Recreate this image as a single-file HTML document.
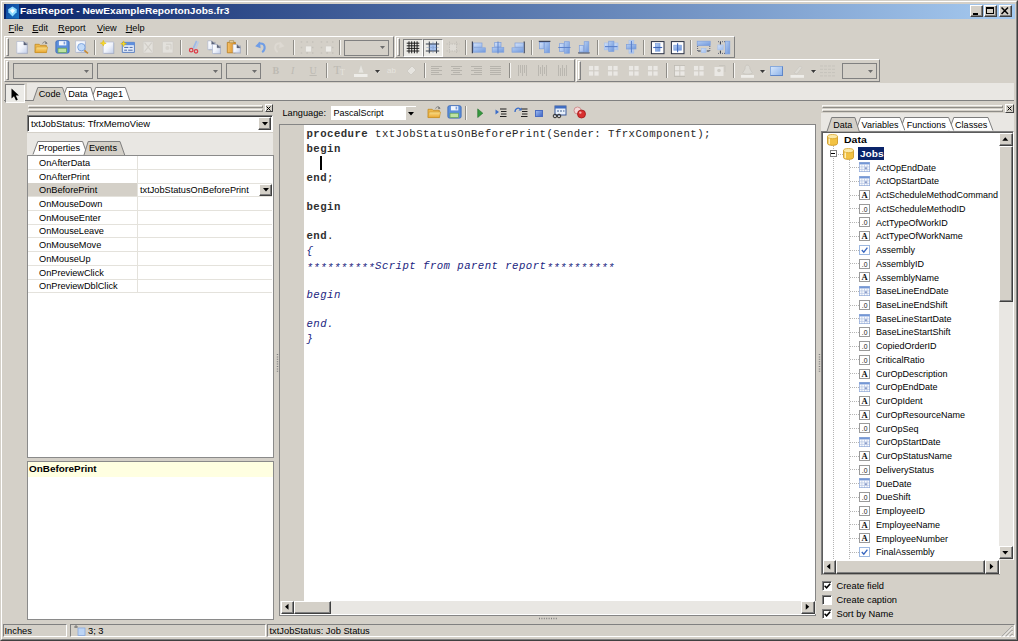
<!DOCTYPE html>
<html><head><meta charset="utf-8"><title>FastReport</title><style>
*{box-sizing:border-box;margin:0;padding:0}
html,body{width:1018px;height:641px;overflow:hidden;background:#d4d0c8}
body{position:relative;font-family:"Liberation Sans",sans-serif;font-size:9.3px;color:#000;line-height:1}
.a{position:absolute}
.t{position:absolute;white-space:pre;line-height:12px;height:12px}
.raised{border:1px solid;border-color:#fff #808080 #808080 #fff}
.sunken{border:1px solid;border-color:#808080 #fff #fff #808080}
.sep{position:absolute;width:2px;border-left:1px solid #8e8c87;border-right:1px solid #f6f5f2}
.grip{position:absolute;width:3px;border:1px solid;border-color:#fff #808080 #808080 #fff}
.combo{position:absolute;border:1px solid #808080;background:#d4d0c8}
.hl{position:absolute;height:1px}
.vl{position:absolute;width:1px}
.code{color:#262626;font-family:"Liberation Mono",monospace;font-size:10.7px;letter-spacing:.44px;position:absolute;white-space:pre;line-height:14.63px;height:14.63px;left:306.5px}
.kw{font-weight:bold;color:#303030}
.cm{font-style:italic;color:#1a2480}
.as{position:relative;top:2.6px}
.row{position:absolute;left:28px;width:244px;height:1px;background:#e4e2dc}
</style></head><body>
<div class="a" style="left:0px;top:0px;width:1018px;height:641px;border:1px solid;border-color:#d4d0c8 #404040 #404040 #d4d0c8"></div>
<div class="a" style="left:1px;top:1px;width:1016px;height:639px;border:1px solid;border-color:#fff #808080 #808080 #fff"></div>
<div class="a" style="left:4px;top:4px;width:1010.5px;height:14.7px;background:linear-gradient(90deg,#0a246a 0%,#a6caf0 100%)"></div>
<div class="t" style="left:20.4px;top:5.1px;color:#fff;font-weight:bold;font-size:9.7px;transform:scaleX(1.045);transform-origin:0 0">FastReport - NewExampleReportonJobs.fr3</div>
<svg class="a" style="left:6px;top:4px" width="13" height="15" viewBox="0 0 13 15"><defs><linearGradient id="ai" x1="0" y1="0" x2="1" y2="1"><stop offset="0" stop-color="#0b3f96"/><stop offset="1" stop-color="#1a74c4"/></linearGradient></defs><rect width="13" height="14.7" fill="url(#ai)"/><path d="M2.2 5.2L6.5 2.6L10.8 5.2L10.6 8.2L6.5 12.6L2.4 8.2Z" fill="#8fdcff"/><path d="M4 6.6L6.5 4.6L9 6.6L6.5 9.6Z" fill="#f4fcff"/></svg>
<div class="a" style="left:970px;top:5px;width:13px;height:12px;background:#d4d0c8;border:1px solid;border-color:#fff #404040 #404040 #fff;box-shadow:inset -1px -1px 0 #808080"></div>
<div class="a" style="left:973px;top:13px;width:5px;height:2px;background:#000"></div>
<div class="a" style="left:984px;top:5px;width:13px;height:12px;background:#d4d0c8;border:1px solid;border-color:#fff #404040 #404040 #fff;box-shadow:inset -1px -1px 0 #808080"></div>
<div class="a" style="left:986px;top:7px;width:8px;height:7px;border:1px solid #000;border-top-width:2px"></div>
<div class="a" style="left:999px;top:5px;width:13px;height:12px;background:#d4d0c8;border:1px solid;border-color:#fff #404040 #404040 #fff;box-shadow:inset -1px -1px 0 #808080"></div>
<svg class="a" style="left:1001px;top:7px" width="8" height="8" viewBox="0 0 8 8"><path d="M0.5 0.5L7 7M7 0.5L0.5 7" stroke="#000" stroke-width="1.5"/></svg>
<div class="t" style="left:8.6px;top:22px;font-size:9.2px"><u>F</u>ile</div>
<div class="t" style="left:32.2px;top:22px;font-size:9.2px"><u>E</u>dit</div>
<div class="t" style="left:58px;top:22px;font-size:9.2px"><u>R</u>eport</div>
<div class="t" style="left:97px;top:22px;font-size:9.2px"><u>V</u>iew</div>
<div class="t" style="left:125.7px;top:22px;font-size:9.2px"><u>H</u>elp</div>
<div class="a raised" style="left:4px;top:36.3px;width:390px;height:21.7px;"></div>
<div class="grip" style="left:6px;top:38.3px;height:17.7px"></div>
<div class="a raised" style="left:395px;top:36.3px;width:340px;height:21.7px;"></div>
<div class="grip" style="left:397px;top:38.3px;height:17.7px"></div>
<div class="a raised" style="left:4px;top:59.3px;width:571px;height:22.5px;"></div>
<div class="grip" style="left:6px;top:61.3px;height:18.5px"></div>
<div class="a raised" style="left:576px;top:59.3px;width:304px;height:22.5px;"></div>
<div class="grip" style="left:578px;top:61.3px;height:18.5px"></div>
<div class="sep" style="left:94px;top:40px;height:15px"></div>
<div class="sep" style="left:180px;top:40px;height:15px"></div>
<div class="sep" style="left:246px;top:40px;height:15px"></div>
<div class="sep" style="left:292.5px;top:40px;height:15px"></div>
<div class="sep" style="left:338.5px;top:40px;height:15px"></div>
<div class="sep" style="left:465px;top:40px;height:15px"></div>
<div class="sep" style="left:531px;top:40px;height:15px"></div>
<div class="sep" style="left:596.5px;top:40px;height:15px"></div>
<div class="sep" style="left:643px;top:40px;height:15px"></div>
<div class="sep" style="left:690px;top:40px;height:15px"></div>
<div class="sep" style="left:326px;top:63px;height:15px"></div>
<div class="sep" style="left:423.5px;top:63px;height:15px"></div>
<div class="sep" style="left:509px;top:63px;height:15px"></div>
<div class="sep" style="left:666px;top:63px;height:15px"></div>
<div class="sep" style="left:732.5px;top:63px;height:15px"></div>
<div class="combo" style="left:343.5px;top:39.5px;width:45.5px;height:16.5px;background:#d4d0c8"></div>
<svg class="a" style="left:380px;top:46px" width="5" height="3" viewBox="0 0 5 3"><path d="M0 0H5L2.5 3Z" fill="#6c6c6c"/></svg>
<div class="combo" style="left:13px;top:63px;width:80px;height:16px;background:#d4d0c8"></div>
<svg class="a" style="left:84px;top:70px" width="5" height="3" viewBox="0 0 5 3"><path d="M0 0H5L2.5 3Z" fill="#6c6c6c"/></svg>
<div class="combo" style="left:97px;top:63px;width:125px;height:16px;background:#d4d0c8"></div>
<svg class="a" style="left:213px;top:70px" width="5" height="3" viewBox="0 0 5 3"><path d="M0 0H5L2.5 3Z" fill="#6c6c6c"/></svg>
<div class="combo" style="left:226px;top:63px;width:34.5px;height:16px;background:#d4d0c8"></div>
<svg class="a" style="left:252px;top:70px" width="5" height="3" viewBox="0 0 5 3"><path d="M0 0H5L2.5 3Z" fill="#6c6c6c"/></svg>
<div class="combo" style="left:842px;top:63px;width:34.5px;height:16px;background:#d4d0c8"></div>
<svg class="a" style="left:868px;top:70px" width="5" height="3" viewBox="0 0 5 3"><path d="M0 0H5L2.5 3Z" fill="#6c6c6c"/></svg>
<svg class="a" style="left:34.2px;top:39.6px" width="15" height="14" viewBox="0 0 15 14"><defs><linearGradient id="gf" x1="0" y1="0" x2="0" y2="1"><stop offset="0" stop-color="#fbe08a"/><stop offset="1" stop-color="#e9a52f"/></linearGradient></defs><path d="M1 4.3H5.2L6.2 5.3H12.3V12.5H1Z" fill="#eeb84a" stroke="#c08c24" stroke-width=".8"/><path d="M2.2 7H13.6L12.4 12.6H1Z" fill="url(#gf)" stroke="#c8922a" stroke-width=".6"/><path d="M8.6 3.6C9.4 1.4 11.6 1.2 12.6 2.8" stroke="#7a7a7a" fill="none" stroke-width=".9"/><path d="M11.6 1.4L13.6 3.6 11.2 3.9Z" fill="#6a6a6a"/></svg>
<svg class="a" style="left:54.6px;top:40.2px" width="15" height="14" viewBox="0 0 15 14"><rect x="0.9" y="0.7" width="13.2" height="12.4" rx="1.6" fill="#5b8edb" stroke="#3c69b8" stroke-width=".9"/><rect x="3.9" y="1.1" width="7.4" height="4.3" fill="#f2f6fd"/><rect x="8.6" y="1.6" width="1.6" height="2.8" fill="#7da0dc"/><rect x="3" y="8.2" width="8.6" height="4.4" fill="#bfe3a2" stroke="#5fa052" stroke-width=".7"/></svg>
<svg class="a" style="left:0;top:0" width="1018" height="641" viewBox="0 0 1018 641"><defs><linearGradient id="pg" x1="0" y1="0" x2="1" y2="1"><stop offset="0" stop-color="#ffffff"/><stop offset=".5" stop-color="#f1f4fb"/><stop offset="1" stop-color="#c3cfea"/></linearGradient><linearGradient id="og" x1="0" y1="0" x2="1" y2="0"><stop offset="0" stop-color="#f6c36a"/><stop offset="1" stop-color="#d98a20"/></linearGradient></defs><path d="M17.8 42.5H27.8V53.800000000000004H17.8Z" fill="#8088a0" opacity=".55"/><path d="M16.8 41.5H23.8L27.2 44.9V53.2H16.8Z" fill="url(#pg)" stroke="#a8b2cc" stroke-width="0.6" /><path d="M23.8 41.5V44.9H27.2Z" fill="#5a6278" stroke="#5a6278" stroke-width="0.3" /><path d="M76.6 41.9H86.0V53.0H76.6Z" fill="#8088a0" opacity=".55"/><path d="M75.6 40.9H85.4V52.4H75.6Z" fill="url(#pg)" stroke="#a8b2cc" stroke-width="0.6" /><circle cx="81.4" cy="47.2" r="3.7" fill="#c2daf8" stroke="#7fa6e0" stroke-width="1"/><path d="M84.3 50.4L88 53.4" fill="None" stroke="#c88a30" stroke-width="1.6" /><path d="M104.2 43H114.19999999999999V53.9H104.2Z" fill="#8088a0" opacity=".55"/><path d="M103.2 42H113.6V53.3H103.2Z" fill="url(#pg)" stroke="#a8b2cc" stroke-width="0.6" /><path d="M103.3 40.300000000000004L104.1 42.400000000000006L106.2 43.2L104.1 44.0L103.3 46.1L102.5 44.0L100.39999999999999 43.2L102.5 42.400000000000006Z" fill="#f8dc28" stroke="#e0b400" stroke-width="0.5" /><path d="M122.3 42.4H134.4V52.4H122.3Z" fill="#e4ecfa" stroke="#4f78c0" stroke-width="0.9" /><path d="M122.3 42.4H134.4V45.2H122.3Z" fill="#5f8fde" /><path d="M124.2 47.4H128.4M129.6 47.4H132.6M124.2 50.2H127M128.2 50.2H132.6" fill="None" stroke="#4a6aa8" stroke-width="1" /><path d="M123.6 40.9L124.39999999999999 43.0L126.5 43.8L124.39999999999999 44.599999999999994L123.6 46.699999999999996L122.8 44.599999999999994L120.69999999999999 43.8L122.8 43.0Z" fill="#f8dc28" stroke="#e0b400" stroke-width="0.5" /><path d="M143.2 41.6H153V53H143.2Z" fill="#e3e1dc" stroke="#cfccc5" stroke-width="0.7" /><path d="M144.5 42.6L151.8 51.6M151.8 42.6L144.5 51.6" fill="None" stroke="#d0cdc7" stroke-width="1.1" /><path d="M162.4 41.6H173V53H162.4Z" fill="#e3e1dc" stroke="#cfccc5" stroke-width="0.7" /><path d="M166 44.2H171V49.5" fill="None" stroke="#d0cdc7" stroke-width="1" /><circle cx="167.4" cy="48" r="2" fill="#d6d3cd"/><path d="M196.6 40.8L193.2 48.6" fill="None" stroke="#9cb8e6" stroke-width="1.7" /><path d="M198.4 41.6L195.6 48.8" fill="None" stroke="#b4c9ec" stroke-width="1.3" /><circle cx="191.2" cy="50.2" r="1.75" fill="none" stroke="#dc3c48" stroke-width="1.25"/><circle cx="196" cy="51.3" r="1.75" fill="none" stroke="#dc3c48" stroke-width="1.25"/><path d="M208.8 41.9H215.6V50.2H208.8Z" fill="#8088a0" opacity=".55"/><path d="M207.8 40.9H211.6L215 44.3V49.6H207.8Z" fill="url(#pg)" stroke="#a8b2cc" stroke-width="0.6" /><path d="M211.6 40.9V44.3H215Z" fill="#5a6278" stroke="#5a6278" stroke-width="0.3" /><path d="M213.5 45.4H221.0V54.1H213.5Z" fill="#8088a0" opacity=".55"/><path d="M212.5 44.4H217.0L220.4 47.8V53.5H212.5Z" fill="url(#pg)" stroke="#a8b2cc" stroke-width="0.6" /><path d="M217.0 44.4V47.8H220.4Z" fill="#5a6278" stroke="#5a6278" stroke-width="0.3" /><path d="M227.3 42.4H235.4V52.8H227.3Z" fill="url(#og)" stroke="#b87a1c" stroke-width="0.8" /><path d="M229.4 40.6H233.6V42.8H229.4Z" fill="#e8cf9c" stroke="#a08850" stroke-width="0.6" /><path d="M234 45.5H240.9V53.4H234Z" fill="#8088a0" opacity=".55"/><path d="M233 44.5H236.9L240.3 47.9V52.8H233Z" fill="url(#pg)" stroke="#a8b2cc" stroke-width="0.6" /><path d="M236.9 44.5V47.9H240.3Z" fill="#5a6278" stroke="#5a6278" stroke-width="0.3" /><path d="M262.2 52.2C266 49.5 265.4 43.2 260.4 43.4L258.6 43.6" fill="None" stroke="#6f9de6" stroke-width="2" /><path d="M255.2 46.3L260 41.6L260.6 48.2Z" fill="#6f9de6" /><path d="M277.6 52.2C273.8 49.5 274.4 43.2 279.4 43.4L281.2 43.6" fill="None" stroke="#ddd9d2" stroke-width="1.8" /><path d="M284.6 46.3L279.8 41.6L279.2 48.2Z" fill="#ddd9d2" /><path d="M305.5 46H311.5V52H305.5Z" fill="#eeede9" stroke="#cfccc6" stroke-width="0.7" /><path d="M300.7 41.2h1.5v1.5h-1.5Z" fill="#c4c1ba" /><path d="M306.4 41.2h1.5v1.5h-1.5Z" fill="#c4c1ba" /><path d="M312.0 41.2h1.5v1.5h-1.5Z" fill="#c4c1ba" /><path d="M300.7 46.8h1.5v1.5h-1.5Z" fill="#c4c1ba" /><path d="M300.7 52.3h1.5v1.5h-1.5Z" fill="#c4c1ba" /><path d="M312.0 52.3h1.5v1.5h-1.5Z" fill="#c4c1ba" /><path d="M312.0 46.8h1.5v1.5h-1.5Z" fill="#c4c1ba" /><path d="M306.4 52.3h1.5v1.5h-1.5Z" fill="#c4c1ba" /><path d="M325.5 46H331.5V52H325.5Z" fill="#eeede9" stroke="#cfccc6" stroke-width="0.7" /><path d="M320.7 41.2h1.5v1.5h-1.5Z" fill="#c4c1ba" /><path d="M326.4 41.2h1.5v1.5h-1.5Z" fill="#c4c1ba" /><path d="M332.0 41.2h1.5v1.5h-1.5Z" fill="#c4c1ba" /><path d="M320.7 46.8h1.5v1.5h-1.5Z" fill="#c4c1ba" /><path d="M320.7 52.3h1.5v1.5h-1.5Z" fill="#c4c1ba" /><path d="M332.0 52.3h1.5v1.5h-1.5Z" fill="#c4c1ba" /><path d="M332.0 46.8h1.5v1.5h-1.5Z" fill="#c4c1ba" /><path d="M326.4 52.3h1.5v1.5h-1.5Z" fill="#c4c1ba" /></svg>
<div class="a" style="left:403px;top:38.5px;width:20px;height:18.5px;background:#ecebe7;border:1px solid;border-color:#808080 #fff #fff #808080"></div>
<div class="a" style="left:423px;top:38.5px;width:20px;height:18.5px;background:#ecebe7;border:1px solid;border-color:#808080 #fff #fff #808080"></div>
<svg class="a" style="left:406px;top:41px" width="14" height="13" viewBox="0 0 14 13"><path d="M3 0.3V12.3M5.7 0.3V12.3M8.4 0.3V12.3M11.1 0.3V12.3M0.7 2.2H13.3M0.7 4.8H13.3M0.7 7.4H13.3M0.7 10H13.3" stroke="#181818" stroke-width="0.95"/></svg>
<svg class="a" style="left:425px;top:41px" width="15" height="13" viewBox="0 0 15 13"><rect x="4.3" y="2.6" width="7.2" height="7.4" fill="#a4c0ee"/><path d="M4.3 0.5V12.3M11.5 0.5V12.3M0.8 3H14.2M0.8 10H14.2" stroke="#39404e" stroke-width="1"/><path d="M8 0.8V12M1.6 6.5H14" stroke="#6a86b8" stroke-width=".7" stroke-dasharray="1 1"/></svg>
<svg class="a" style="left:446px;top:41px" width="14" height="13" viewBox="0 0 14 13"><rect x="3.5" y="3" width="7" height="7" fill="#dedbd5"/><path d="M3.5 0.5V12.5M10.5 0.5V12.5M0.5 3H13.5M0.5 10H13.5" stroke="#c2bfb8" stroke-width="1" stroke-dasharray="1.5 1"/></svg>
<svg class="a" style="left:0;top:0" width="1018" height="641" viewBox="0 0 1018 641"><defs><linearGradient id="gb" x1="0" y1="0" x2="1" y2="1"><stop offset="0" stop-color="#b4cdf2"/><stop offset="1" stop-color="#6f97dc"/></linearGradient><linearGradient id="gl" x1="0" y1="0" x2="1" y2="1"><stop offset="0" stop-color="#d4e2f8"/><stop offset="1" stop-color="#9dbbec"/></linearGradient></defs><path d="M472.4 41.5L472.4 53.3" stroke="#3a4258" stroke-width="1.2" fill="none"/><rect x="473.3" y="43" width="8.7" height="4.2" fill="url(#gl)" stroke="#7d9fdd" stroke-width="0.7"/><rect x="473.3" y="47.8" width="12.0" height="4.4" fill="url(#gb)" stroke="#7d9fdd" stroke-width="0.7"/><rect x="494.7" y="42.6" width="6.3" height="4.4" fill="url(#gl)" stroke="#7d9fdd" stroke-width="0.7"/><rect x="492.2" y="47.6" width="11.6" height="4.6" fill="url(#gb)" stroke="#7d9fdd" stroke-width="0.7"/><path d="M498 41.5L498 53.5" stroke="#5f84cc" stroke-width="1" fill="none"/><path d="M524.2 41.5L524.2 53.3" stroke="#3a4258" stroke-width="1.2" fill="none"/><rect x="515" y="43" width="8.3" height="4.2" fill="url(#gl)" stroke="#7d9fdd" stroke-width="0.7"/><rect x="512" y="47.8" width="11.3" height="4.4" fill="url(#gb)" stroke="#7d9fdd" stroke-width="0.7"/><path d="M538.8 41.4L550.4 41.4" stroke="#3a4258" stroke-width="1.2" fill="none"/><rect x="539.6" y="42.3" width="4.4" height="6.5" fill="url(#gl)" stroke="#7d9fdd" stroke-width="0.7"/><rect x="544.5" y="42.3" width="5.1" height="10.5" fill="url(#gb)" stroke="#7d9fdd" stroke-width="0.7"/><rect x="559.5" y="43.7" width="4.5" height="7.6" fill="url(#gl)" stroke="#7d9fdd" stroke-width="0.7"/><rect x="564.6" y="41.7" width="4.8" height="11.5" fill="url(#gb)" stroke="#7d9fdd" stroke-width="0.7"/><path d="M558.3 47.5L570.5 47.5" stroke="#5f84cc" stroke-width="1" fill="none"/><path d="M578.2 52.9L589.6 52.9" stroke="#3a4258" stroke-width="1.2" fill="none"/><rect x="579.3" y="45.6" width="4.3" height="6.4" fill="url(#gl)" stroke="#7d9fdd" stroke-width="0.7"/><rect x="584.2" y="41.7" width="4.6" height="10.3" fill="url(#gb)" stroke="#7d9fdd" stroke-width="0.7"/><rect x="604.3" y="43" width="4.4" height="6.8" fill="url(#gl)" stroke="#a8c2ec" stroke-width="0.7"/><rect x="613.9" y="43" width="4.1" height="6.8" fill="url(#gl)" stroke="#a8c2ec" stroke-width="0.7"/><rect x="608.7" y="41.2" width="5.2" height="10.2" fill="url(#gb)" stroke="#7d9fdd" stroke-width="0.7"/><path d="M605 46.6L617.5 46.6" stroke="#5a80cc" stroke-width="1.1" fill="none"/><rect x="629" y="40.3" width="4.8" height="4.2" fill="url(#gl)" stroke="#a8c2ec" stroke-width="0.7"/><rect x="629" y="49" width="4.8" height="4.2" fill="url(#gl)" stroke="#a8c2ec" stroke-width="0.7"/><rect x="626.5" y="44.5" width="9.5" height="4.5" fill="url(#gb)" stroke="#7d9fdd" stroke-width="0.7"/><path d="M631.4 41L631.4 52.6" stroke="#5a80cc" stroke-width="1.1" fill="none"/><rect x="651.4" y="41.6" width="12.6" height="12.1" fill="#fff" stroke="#283044" stroke-width="1"/><rect x="655.4" y="43.6" width="4.6" height="7.6" fill="url(#gb)" stroke="#7d9fdd" stroke-width="0.7"/><path d="M653.2 47.5L662.2 47.5" stroke="#3e66b8" stroke-width="1.1" fill="none"/><rect x="671.4" y="41.6" width="12.6" height="12.1" fill="#fff" stroke="#283044" stroke-width="1"/><rect x="673.8" y="45.2" width="7.6" height="5.0" fill="url(#gb)" stroke="#7d9fdd" stroke-width="0.7"/><path d="M677.6 43.3L677.6 52.2" stroke="#3e66b8" stroke-width="1.1" fill="none"/><rect x="697.2" y="41.2" width="13.0" height="4.4" fill="url(#gb)" stroke="#7d9fdd" stroke-width="0.7"/><rect x="701.3" y="48.4" width="4.7" height="4.2" fill="url(#gl)" stroke="#a8c2ec" stroke-width="0.7"/><path d="M697.6 46L697.6 52" stroke="#505870" stroke-width="0.9" stroke-dasharray="1 1" fill="none"/><path d="M709.8 46L709.8 52" stroke="#505870" stroke-width="0.9" stroke-dasharray="1 1" fill="none"/><path d="M698 51L700.6 51" stroke="#303848" stroke-width="1" fill="none"/><path d="M706.8 51L709.4 51" stroke="#303848" stroke-width="1" fill="none"/><rect x="725.3" y="41.2" width="4.5" height="12.7" fill="url(#gb)" stroke="#7d9fdd" stroke-width="0.7"/><rect x="717.8" y="45" width="5.4" height="4.8" fill="url(#gl)" stroke="#a8c2ec" stroke-width="0.7"/><path d="M718 41.7L725 41.7" stroke="#505870" stroke-width="0.9" stroke-dasharray="1 1" fill="none"/><path d="M718 53.4L725 53.4" stroke="#505870" stroke-width="0.9" stroke-dasharray="1 1" fill="none"/><path d="M720.4 42L720.4 44.4" stroke="#303848" stroke-width="1" fill="none"/><path d="M720.4 50.6L720.4 53" stroke="#303848" stroke-width="1" fill="none"/></svg>
<div class="t" style="left:272.5px;top:64.5px;font-family:Liberation Serif,serif;font-weight:bold;font-size:10px;color:#bdbab3">B</div>
<div class="t" style="left:291px;top:64.5px;font-family:Liberation Serif,serif;font-style:italic;font-size:10px;color:#bdbab3">I</div>
<div class="t" style="left:309.5px;top:64.5px;font-family:Liberation Serif,serif;font-size:10px;color:#bdbab3"><u>U</u></div>
<div class="t" style="left:333.5px;top:63.5px;font-family:Liberation Serif,serif;font-size:12px;color:#bdbab3">T</div>
<div class="t" style="left:340px;top:67px;font-family:Liberation Serif,serif;font-size:8px;color:#e6e4df">T</div>
<svg class="a" style="left:353px;top:63px" width="16" height="15" viewBox="0 0 16 15"><path d="M8 1L5 10H11Z" fill="#e6e4df" stroke="#cfccc5" stroke-width=".6"/><rect x="1" y="11" width="13.5" height="3" fill="#eeede9"/></svg>
<svg class="a" style="left:374.5px;top:70px" width="5" height="3" viewBox="0 0 5 3"><path d="M0 0H5L2.5 3Z" fill="#3a3a3a"/></svg>
<svg class="a" style="left:375px;top:70.6px" width="5" height="3" viewBox="0 0 5 3"><path d="M4.3 0L5 0 2.5 3Z" fill="#fff"/></svg>
<div class="t" style="left:387px;top:65px;font-size:8px;color:#e6e4df">ab</div>
<svg class="a" style="left:405px;top:64px" width="13" height="13" viewBox="0 0 13 13"><path d="M2 7L7 2L11 6L6 11Z" fill="#e6e4df" stroke="#cbc8c1" stroke-width=".8"/></svg>
<svg class="a" style="left:431px;top:65px" width="12" height="12" viewBox="0 0 12 12"><rect x="0" y="1" width="11" height="1" fill="#b6b3ac"/><rect x="0" y="3" width="8" height="1" fill="#b6b3ac"/><rect x="0" y="5" width="11" height="1" fill="#b6b3ac"/><rect x="0" y="7" width="8" height="1" fill="#b6b3ac"/><rect x="0" y="9" width="11" height="1" fill="#b6b3ac"/></svg>
<svg class="a" style="left:451px;top:65px" width="12" height="12" viewBox="0 0 12 12"><rect x="0" y="1" width="11" height="1" fill="#b6b3ac"/><rect x="2" y="3" width="7" height="1" fill="#b6b3ac"/><rect x="0" y="5" width="11" height="1" fill="#b6b3ac"/><rect x="2" y="7" width="7" height="1" fill="#b6b3ac"/><rect x="0" y="9" width="11" height="1" fill="#b6b3ac"/></svg>
<svg class="a" style="left:471px;top:65px" width="12" height="12" viewBox="0 0 12 12"><rect x="0" y="1" width="11" height="1" fill="#b6b3ac"/><rect x="3" y="3" width="8" height="1" fill="#b6b3ac"/><rect x="0" y="5" width="11" height="1" fill="#b6b3ac"/><rect x="3" y="7" width="8" height="1" fill="#b6b3ac"/><rect x="0" y="9" width="11" height="1" fill="#b6b3ac"/></svg>
<svg class="a" style="left:490px;top:65px" width="12" height="12" viewBox="0 0 12 12"><rect x="0" y="1" width="11" height="1" fill="#b6b3ac"/><rect x="0" y="3" width="11" height="1" fill="#b6b3ac"/><rect x="0" y="5" width="11" height="1" fill="#b6b3ac"/><rect x="0" y="7" width="11" height="1" fill="#b6b3ac"/><rect x="0" y="9" width="11" height="1" fill="#b6b3ac"/></svg>
<svg class="a" style="left:517px;top:65px" width="12" height="12" viewBox="0 0 12 12"><rect x="1" y="0" width="1" height="11" fill="#bab7b0"/><rect x="3" y="0" width="1" height="8" fill="#bab7b0"/><rect x="5" y="0" width="1" height="11" fill="#bab7b0"/><rect x="7" y="0" width="1" height="8" fill="#bab7b0"/><rect x="9" y="0" width="1" height="11" fill="#bab7b0"/></svg>
<svg class="a" style="left:537px;top:65px" width="12" height="12" viewBox="0 0 12 12"><rect x="1" y="0" width="1" height="11" fill="#bab7b0"/><rect x="3" y="2" width="1" height="7" fill="#bab7b0"/><rect x="5" y="0" width="1" height="11" fill="#bab7b0"/><rect x="7" y="2" width="1" height="7" fill="#bab7b0"/><rect x="9" y="0" width="1" height="11" fill="#bab7b0"/></svg>
<svg class="a" style="left:557px;top:65px" width="12" height="12" viewBox="0 0 12 12"><rect x="1" y="0" width="1" height="11" fill="#bab7b0"/><rect x="3" y="3" width="1" height="8" fill="#bab7b0"/><rect x="5" y="0" width="1" height="11" fill="#bab7b0"/><rect x="7" y="3" width="1" height="8" fill="#bab7b0"/><rect x="9" y="0" width="1" height="11" fill="#bab7b0"/></svg>
<svg class="a" style="left:587.5px;top:65px" width="11.5" height="11.5" viewBox="-0.5 -0.5 12 12"><g fill="#eae8e4"><rect x="0.5" y="0.5" width="4.6" height="4.6"/><rect x="6" y="0.5" width="4.6" height="4.6"/><rect x="0.5" y="6" width="4.6" height="4.6"/><rect x="6" y="6" width="4.6" height="4.6"/></g><path d="M5.5 0V11M0 5.5H11" stroke="#d0cdc6" stroke-width=".8"/></svg>
<svg class="a" style="left:607px;top:65px" width="11.5" height="11.5" viewBox="-0.5 -0.5 12 12"><g fill="#eae8e4"><rect x="0.5" y="0.5" width="4.6" height="4.6"/><rect x="6" y="0.5" width="4.6" height="4.6"/><rect x="0.5" y="6" width="4.6" height="4.6"/><rect x="6" y="6" width="4.6" height="4.6"/></g><path d="M5.5 0V11M0 5.5H11" stroke="#d0cdc6" stroke-width=".8"/></svg>
<svg class="a" style="left:627.5px;top:65px" width="11.5" height="11.5" viewBox="-0.5 -0.5 12 12"><g fill="#eae8e4"><rect x="0.5" y="0.5" width="4.6" height="4.6"/><rect x="6" y="0.5" width="4.6" height="4.6"/><rect x="0.5" y="6" width="4.6" height="4.6"/><rect x="6" y="6" width="4.6" height="4.6"/></g><path d="M5.5 0V11M0 5.5H11" stroke="#d0cdc6" stroke-width=".8"/></svg>
<svg class="a" style="left:646.5px;top:65px" width="11.5" height="11.5" viewBox="-0.5 -0.5 12 12"><g fill="#eae8e4"><rect x="0.5" y="0.5" width="4.6" height="4.6"/><rect x="6" y="0.5" width="4.6" height="4.6"/><rect x="0.5" y="6" width="4.6" height="4.6"/><rect x="6" y="6" width="4.6" height="4.6"/></g><path d="M5.5 0V11M0 5.5H11" stroke="#d0cdc6" stroke-width=".8"/></svg>
<svg class="a" style="left:673.5px;top:65px" width="11.5" height="11.5" viewBox="-0.5 -0.5 12 12"><g fill="#eae8e4"><rect x="0.5" y="0.5" width="4.6" height="4.6"/><rect x="6" y="0.5" width="4.6" height="4.6"/><rect x="0.5" y="6" width="4.6" height="4.6"/><rect x="6" y="6" width="4.6" height="4.6"/></g><path d="M5.5 0V11M0 5.5H11" stroke="#d0cdc6" stroke-width=".8"/><rect x="-.3" y="-.3" width="11.6" height="11.6" fill="none" stroke="#b9b6af" stroke-width=".8"/></svg>
<svg class="a" style="left:693px;top:65px" width="11.5" height="11.5" viewBox="-0.5 -0.5 12 12"><g fill="#eae8e4"><rect x="0.5" y="0.5" width="4.6" height="4.6"/><rect x="6" y="0.5" width="4.6" height="4.6"/><rect x="0.5" y="6" width="4.6" height="4.6"/><rect x="6" y="6" width="4.6" height="4.6"/></g><path d="M5.5 0V11M0 5.5H11" stroke="#d0cdc6" stroke-width=".8"/></svg>
<svg class="a" style="left:713.5px;top:64.5px" width="12" height="12" viewBox="0 0 12 12"><rect x="0.5" y="2" width="9" height="9" fill="#eae8e4"/><path d="M5 0.5H11V7" fill="none" stroke="#c8c5be" stroke-width="1"/><circle cx="5" cy="5.5" r="1.8" fill="#cfccc5"/></svg>
<svg class="a" style="left:739.5px;top:63.5px" width="15" height="15" viewBox="0 0 15 15"><path d="M7 1C9 1 10 3 10 5L12.5 9C12.5 10.5 2.5 10.5 2.5 9L5 5C5 3 5.5 1 7 1Z" fill="#dcdad4" stroke="#c4c1ba" stroke-width=".7"/><rect x="1" y="11" width="13" height="2.8" fill="#eeede9"/></svg>
<svg class="a" style="left:760.0px;top:70px" width="5" height="3" viewBox="0 0 5 3"><path d="M0 0H5L2.5 3Z" fill="#3a3a3a"/></svg>
<svg class="a" style="left:760.5px;top:70.6px" width="5" height="3" viewBox="0 0 5 3"><path d="M4.3 0L5 0 2.5 3Z" fill="#fff"/></svg>
<div class="a" style="left:770.4px;top:65.5px;width:12.8px;height:10px;background:linear-gradient(135deg,#d6e6fa,#8fb4ea);border:1px solid #5f86c8;border-top-color:#88aadc;border-left-color:#88aadc"></div>
<svg class="a" style="left:789.5px;top:63.5px" width="15" height="15" viewBox="0 0 15 15"><path d="M4 9L10 2L12 3.5L7 10Z" fill="#dcdad4" stroke="#c8c5be" stroke-width=".6"/><rect x="0.5" y="11" width="13.5" height="2.8" fill="#eeede9"/></svg>
<svg class="a" style="left:810.5px;top:70px" width="5" height="3" viewBox="0 0 5 3"><path d="M0 0H5L2.5 3Z" fill="#3a3a3a"/></svg>
<svg class="a" style="left:811px;top:70.6px" width="5" height="3" viewBox="0 0 5 3"><path d="M4.3 0L5 0 2.5 3Z" fill="#fff"/></svg>
<svg class="a" style="left:819.5px;top:65px" width="15" height="12" viewBox="0 0 15 12"><path d="M0 1H15M0 4.3H15M0 7.6H15M0 10.9H15" stroke="#c6c3bc" stroke-width="1" stroke-dasharray="3 1"/></svg>
<div class="a" style="left:27px;top:82.5px;width:987px;height:18px;background:#e9e7e3"></div>
<div class="a" style="left:4px;top:100px;width:1010px;height:1px;background:#808080"></div>
<div class="a" style="left:5px;top:84px;width:19.5px;height:19px;background:#ecebe7;border:1px solid;border-color:#808080 #fff #fff #808080"></div>
<svg class="a" style="left:11px;top:87.5px" width="9" height="13" viewBox="0 0 9 13"><path d="M0.5 0.5V10.5L3 8.2L5 12.5L6.8 11.7L4.8 7.6H8Z" fill="#000"/></svg>
<svg class="a" style="left:89.5px;top:87px" width="40.8" height="13.5" viewBox="0 0 40.8 13.5"><path d="M1.0 13.5 L5.700000000000003 0.5 H35.3 L39.80000000000001 13.5 Z" fill="#fff"/><path d="M1.0 13.5 L5.700000000000003 0.5 H35.3 L39.80000000000001 13.5" fill="none" stroke="#7c7c7c" stroke-width="1"/></svg>
<div class="t" style="left:96.5px;top:88.3px;font-size:9.2px">Page1</div>
<svg class="a" style="left:61.3px;top:87px" width="34.7" height="13.5" viewBox="0 0 34.7 13.5"><path d="M1.0 13.5 L5.700000000000003 0.5 H29.900000000000006 L33.7 13.5 Z" fill="#fff"/><path d="M1.0 13.5 L5.700000000000003 0.5 H29.900000000000006 L33.7 13.5" fill="none" stroke="#7c7c7c" stroke-width="1"/></svg>
<div class="t" style="left:68.2px;top:88.3px;font-size:9.2px">Data</div>
<svg class="a" style="left:31.799999999999997px;top:87px" width="36.2" height="14.2" viewBox="0 0 36.2 14.2"><path d="M1.0 14.200000000000003 L5.800000000000004 0.5 H30.5 L35.2 14.200000000000003 Z" fill="#d4d0c8"/><path d="M1.0 14.200000000000003 L5.800000000000004 0.5 H30.5 L35.2 14.200000000000003" fill="none" stroke="#7c7c7c" stroke-width="1"/></svg>
<div class="t" style="left:38.7px;top:88.3px;font-size:9.2px">Code</div>
<div class="a" style="left:28px;top:105px;width:234.5px;height:3px;border:1px solid;border-color:#f6f5f2 #8e8c87 #8e8c87 #f6f5f2"></div>
<div class="a" style="left:28px;top:109px;width:234.5px;height:3px;border:1px solid;border-color:#f6f5f2 #8e8c87 #8e8c87 #f6f5f2"></div>
<div class="a" style="left:264.7px;top:104.2px;width:8px;height:8.2px;border:1px solid;border-color:#fff #404040 #404040 #fff"></div>
<svg class="a" style="left:266.2px;top:105.8px" width="5" height="5" viewBox="0 0 5 5"><path d="M0.5 0.5L4.5 4.5M4.5 0.5L0.5 4.5" stroke="#000" stroke-width="1"/></svg>
<div class="a" style="left:27px;top:115px;width:246px;height:17px;background:#fff;border:1px solid;border-color:#808080 #fff #fff #808080;box-shadow:inset 1px 1px 0 #404040"></div>
<div class="t" style="left:31px;top:118px;font-size:9.4px">txtJobStatus: TfrxMemoView</div>
<div class="a" style="left:258px;top:117px;width:13px;height:13px;background:#d4d0c8;border:1px solid;border-color:#fff #404040 #404040 #fff;box-shadow:inset -1px -1px 0 #808080"></div>
<svg class="a" style="left:261.5px;top:122px" width="6" height="4" viewBox="0 0 6 4"><path d="M0 0H6L3 3.5Z" fill="#000"/></svg>
<div class="a" style="left:27px;top:133px;width:246px;height:22px;background:#e9e7e3"></div>
<div class="a" style="left:27px;top:154.5px;width:246.8px;height:303.5px;background:#fff;border:1px solid #8a8a8a"></div>
<svg class="a" style="left:31.799999999999997px;top:141px" width="56.2" height="13.5" viewBox="0 0 56.2 13.5"><path d="M1.0 13.5 L5.800000000000004 0.5 H50.60000000000001 L55.2 13.5 Z" fill="#fff"/><path d="M1.0 13.5 L5.800000000000004 0.5 H50.60000000000001 L55.2 13.5" fill="none" stroke="#7c7c7c" stroke-width="1"/></svg>
<div class="t" style="left:38.2px;top:142.3px;font-size:9.2px">Properties</div>
<svg class="a" style="left:83.1px;top:141px" width="42.7" height="14" viewBox="0 0 42.7 14"><path d="M1.0 14 L5.200000000000003 0.5 H37.0 L41.7 14 Z" fill="#d4d0c8"/><path d="M1.0 14 L5.200000000000003 0.5 H37.0 L41.7 14" fill="none" stroke="#7c7c7c" stroke-width="1"/></svg>
<div class="t" style="left:88.9px;top:142.3px;font-size:9.2px">Events</div>
<div class="t" style="left:39px;top:156.8px;font-size:9.2px">OnAfterData</div>
<div class="row" style="top:168.82px"></div>
<div class="t" style="left:39px;top:170.52px;font-size:9.2px">OnAfterPrint</div>
<div class="row" style="top:182.54px"></div>
<div class="a" style="left:28px;top:183.04px;width:109.5px;height:13.72px;background:#d4d0c8"></div>
<div class="t" style="left:39px;top:184.24px;font-size:9.2px">OnBeforePrint</div>
<div class="row" style="top:196.26px"></div>
<div class="t" style="left:39px;top:197.96px;font-size:9.2px">OnMouseDown</div>
<div class="row" style="top:209.98px"></div>
<div class="t" style="left:39px;top:211.68px;font-size:9.2px">OnMouseEnter</div>
<div class="row" style="top:223.70px"></div>
<div class="t" style="left:39px;top:225.4px;font-size:9.2px">OnMouseLeave</div>
<div class="row" style="top:237.42px"></div>
<div class="t" style="left:39px;top:239.12px;font-size:9.2px">OnMouseMove</div>
<div class="row" style="top:251.14px"></div>
<div class="t" style="left:39px;top:252.84px;font-size:9.2px">OnMouseUp</div>
<div class="row" style="top:264.86px"></div>
<div class="t" style="left:39px;top:266.56px;font-size:9.2px">OnPreviewClick</div>
<div class="row" style="top:278.58px"></div>
<div class="t" style="left:39px;top:280.28px;font-size:9.2px">OnPreviewDblClick</div>
<div class="row" style="top:292.30px"></div>
<div class="a" style="left:137px;top:156px;width:1px;height:137.2px;background:#e4e2dc"></div>
<div class="t" style="left:140px;top:184.24px;font-size:9.2px">txtJobStatusOnBeforePrint</div>
<div class="a" style="left:259px;top:183.54px;width:13px;height:12.5px;background:#d4d0c8;border:1px solid;border-color:#fff #404040 #404040 #fff;box-shadow:inset -1px -1px 0 #808080"></div>
<svg class="a" style="left:262.5px;top:188.04px" width="6" height="4" viewBox="0 0 6 4"><path d="M0 0H6L3 3.5Z" fill="#000"/></svg>
<div class="a" style="left:27px;top:460.7px;width:246.8px;height:159.8px;background:#fff;border:1px solid #8a8a8a"></div>
<div class="a" style="left:28px;top:461.7px;width:244.8px;height:15px;background:#ffffe1"></div>
<div class="t" style="left:29px;top:463.2px;font-weight:bold;font-size:9px;transform:scaleX(1.1);transform-origin:0 0">OnBeforePrint</div>
<svg class="a" style="left:275.5px;top:354px" width="3" height="18" viewBox="0 0 3 18"><path d="M1.5 0V18" stroke="#808080" stroke-width="1.4" stroke-dasharray="1 1.4"/></svg>
<div class="t" style="left:282.5px;top:107.3px;font-size:9.2px">Language:</div>
<div class="a" style="left:331px;top:106px;width:85px;height:14px;background:#fff"></div>
<div class="t" style="left:333.5px;top:107.3px;font-size:9.0px">PascalScript</div>
<div class="a" style="left:405.5px;top:106.5px;width:10px;height:13px;background:#d4d0c8"></div>
<svg class="a" style="left:408px;top:112px" width="6" height="4" viewBox="0 0 6 4"><path d="M0 0H6L3 3.5Z" fill="#000"/></svg>
<svg class="a" style="left:426.5px;top:104.5px" width="15" height="14" viewBox="0 0 15 14"><defs><linearGradient id="gf" x1="0" y1="0" x2="0" y2="1"><stop offset="0" stop-color="#fbe08a"/><stop offset="1" stop-color="#e9a52f"/></linearGradient></defs><path d="M1 4.3H5.2L6.2 5.3H12.3V12.5H1Z" fill="#eeb84a" stroke="#c08c24" stroke-width=".8"/><path d="M2.2 7H13.6L12.4 12.6H1Z" fill="url(#gf)" stroke="#c8922a" stroke-width=".6"/><path d="M8.6 3.6C9.4 1.4 11.6 1.2 12.6 2.8" stroke="#7a7a7a" fill="none" stroke-width=".9"/><path d="M11.6 1.4L13.6 3.6 11.2 3.9Z" fill="#6a6a6a"/></svg>
<svg class="a" style="left:446.5px;top:105px" width="15" height="14" viewBox="0 0 15 14"><rect x="0.9" y="0.7" width="13.2" height="12.4" rx="1.6" fill="#5b8edb" stroke="#3c69b8" stroke-width=".9"/><rect x="3.9" y="1.1" width="7.4" height="4.3" fill="#f2f6fd"/><rect x="8.6" y="1.6" width="1.6" height="2.8" fill="#7da0dc"/><rect x="3" y="8.2" width="8.6" height="4.4" fill="#bfe3a2" stroke="#5fa052" stroke-width=".7"/></svg>
<div class="sep" style="left:465px;top:105.5px;height:14px"></div>
<svg class="a" style="left:477px;top:108px" width="7" height="10" viewBox="0 0 7 10"><path d="M0.7 0.9L5.8 5.2L0.7 9.5Z" fill="#35983f" stroke="#23702c" stroke-width=".6"/></svg>
<svg class="a" style="left:494.5px;top:107px" width="12" height="11" viewBox="0 0 12 11"><path d="M5 2H11.5M6 4.5H11.5M6 7H11.5M5 9.5H11.5" stroke="#202020" stroke-width="1.2"/><path d="M0.5 2.5L4 5L0.5 7.5Z" fill="#3a6cc8"/></svg>
<svg class="a" style="left:513.5px;top:106px" width="14" height="12" viewBox="0 0 14 12"><path d="M7 3H13.5M8 5.5H13.5M8 8H13.5M7 10.5H13.5" stroke="#202020" stroke-width="1.2"/><path d="M1 6C1 2 5 1 6.5 3.5" fill="none" stroke="#3a6cc8" stroke-width="1.3"/><path d="M4.5 4.5H7.5V1.5Z" fill="#3a6cc8"/></svg>
<div class="a" style="left:535px;top:109.5px;width:8px;height:7.5px;background:linear-gradient(135deg,#9bb8ee,#4068c8);border:1px solid #4a6cc0"></div>
<svg class="a" style="left:552px;top:105px" width="15" height="14" viewBox="0 0 15 14"><rect x="3" y="1" width="11" height="9" fill="#e8f0fb" stroke="#3a5a9a"/><rect x="3" y="1" width="11" height="2.5" fill="#3f6cc0"/><path d="M5 6H7M8 6H10M11 6H12.5" stroke="#406090" stroke-width="1"/><circle cx="3" cy="11" r="1.8" fill="none" stroke="#303030" stroke-width="1"/><circle cx="7" cy="11" r="1.8" fill="none" stroke="#303030" stroke-width="1"/></svg>
<svg class="a" style="left:572.5px;top:105.5px" width="14" height="13" viewBox="0 0 14 13"><circle cx="4.5" cy="4.5" r="3.5" fill="#f4d8d8" stroke="#c88080" stroke-width=".8"/><circle cx="8.5" cy="8" r="4" fill="#d83030" stroke="#a01818" stroke-width=".8"/><circle cx="7.3" cy="6.6" r="1.2" fill="#f8b0b0"/></svg>
<div class="a" style="left:279px;top:124px;width:537px;height:492px;background:#fff;border:1px solid #858585"></div>
<div class="a" style="left:280px;top:125px;width:23.7px;height:476px;background:#d4d0c8"></div>
<div class="code " style="top:126.90px"><span class="kw">procedure</span> txtJobStatusOnBeforePrint(Sender: TfrxComponent);</div>
<div class="code " style="top:141.53px"><span class="kw">begin</span></div>
<div class="code " style="top:170.79px"><span class="kw">end</span>;</div>
<div class="code " style="top:200.05px"><span class="kw">begin</span></div>
<div class="code " style="top:229.31px"><span class="kw">end</span>.</div>
<div class="code cm" style="top:243.94px">{</div>
<div class="code cm" style="top:258.57px"><span class="as">**********</span>Script from parent report<span class="as">**********</span></div>
<div class="code cm" style="top:287.83px">begin</div>
<div class="code cm" style="top:317.09px">end.</div>
<div class="code cm" style="top:331.72px">}</div>
<div class="a" style="left:320px;top:155.6px;width:2px;height:14px;background:#000"></div>
<div class="a" style="left:280px;top:600.7px;width:535.5px;height:13.8px;background:#e9e7e3"></div>
<div class="a" style="left:281px;top:600.7px;width:13px;height:13.3px;background:#d4d0c8;border:1px solid;border-color:#fff #404040 #404040 #fff;box-shadow:inset -1px -1px 0 #808080"></div>
<svg class="a" style="left:0;top:0" width="1018" height="641"><path d="M288.5 603.85V609.85L285.0 606.85Z" fill="#000"/></svg>
<div class="a" style="left:294px;top:600.7px;width:37px;height:13.3px;background:#d4d0c8;border:1px solid;border-color:#fff #404040 #404040 #fff;box-shadow:inset -1px -1px 0 #808080"></div>
<div class="a" style="left:801px;top:600.7px;width:13.5px;height:13.3px;background:#d4d0c8;border:1px solid;border-color:#fff #404040 #404040 #fff;box-shadow:inset -1px -1px 0 #808080"></div>
<svg class="a" style="left:0;top:0" width="1018" height="641"><path d="M805.75 603.85V609.85L809.25 606.85Z" fill="#000"/></svg>
<svg class="a" style="left:539px;top:617px" width="18" height="3" viewBox="0 0 18 3"><path d="M0 1.5H18" stroke="#808080" stroke-width="1.4" stroke-dasharray="1 1.4"/></svg>
<svg class="a" style="left:818px;top:354px" width="3" height="18" viewBox="0 0 3 18"><path d="M1.5 0V18" stroke="#808080" stroke-width="1.4" stroke-dasharray="1 1.4"/></svg>
<div class="a" style="left:822px;top:105px;width:181px;height:3px;border:1px solid;border-color:#f6f5f2 #8e8c87 #8e8c87 #f6f5f2"></div>
<div class="a" style="left:822px;top:108.6px;width:181px;height:3px;border:1px solid;border-color:#f6f5f2 #8e8c87 #8e8c87 #f6f5f2"></div>
<div class="a" style="left:1005px;top:104px;width:9px;height:8.5px;border:1px solid;border-color:#fff #404040 #404040 #fff"></div>
<svg class="a" style="left:1007px;top:105.5px" width="5" height="5" viewBox="0 0 5 5"><path d="M0.5 0.5L4.5 4.5M4.5 0.5L0.5 4.5" stroke="#000" stroke-width="1"/></svg>
<div class="a" style="left:821px;top:113px;width:193px;height:19px;background:#e9e7e3"></div>
<div class="a" style="left:821px;top:130.7px;width:193px;height:444.5px;background:#fff;border:1px solid;border-color:#808080 #fff #9f9c97 #808080;box-shadow:inset 1px 1px 0 #5c5c5c"></div>
<svg class="a" style="left:948px;top:117.2px" width="45.9" height="13.5" viewBox="0 0 45.9 13.5"><path d="M1 13.499999999999986 L5.7999999999999545 0.5 H40 L44.89999999999998 13.499999999999986 Z" fill="#fff"/><path d="M1 13.499999999999986 L5.7999999999999545 0.5 H40 L44.89999999999998 13.499999999999986" fill="none" stroke="#7c7c7c" stroke-width="1"/></svg>
<div class="t" style="left:955px;top:118.5px;font-size:9.1px">Classes</div>
<svg class="a" style="left:899px;top:117.2px" width="55.6" height="13.5" viewBox="0 0 55.6 13.5"><path d="M1 13.499999999999986 L5.600000000000023 0.5 H49.60000000000002 L54.60000000000002 13.499999999999986 Z" fill="#fff"/><path d="M1 13.499999999999986 L5.600000000000023 0.5 H49.60000000000002 L54.60000000000002 13.499999999999986" fill="none" stroke="#7c7c7c" stroke-width="1"/></svg>
<div class="t" style="left:906.8px;top:118.5px;font-size:9.0px">Functions</div>
<svg class="a" style="left:854.5px;top:117.2px" width="50.9" height="13.5" viewBox="0 0 50.9 13.5"><path d="M1.0 13.499999999999986 L5.5 0.5 H45.0 L49.89999999999998 13.499999999999986 Z" fill="#fff"/><path d="M1.0 13.499999999999986 L5.5 0.5 H45.0 L49.89999999999998 13.499999999999986" fill="none" stroke="#7c7c7c" stroke-width="1"/></svg>
<div class="t" style="left:861.6px;top:118.5px;font-size:9.0px">Variables</div>
<svg class="a" style="left:826.4px;top:117.2px" width="34.3" height="14.5" viewBox="0 0 34.3 14.5"><path d="M1.0 14.499999999999986 L5.7000000000000455 0.5 H28.899999999999977 L33.30000000000007 14.499999999999986 Z" fill="#d4d0c8"/><path d="M1.0 14.499999999999986 L5.7000000000000455 0.5 H28.899999999999977 L33.30000000000007 14.499999999999986" fill="none" stroke="#7c7c7c" stroke-width="1"/></svg>
<div class="t" style="left:833.3px;top:118.5px;font-size:9.0px">Data</div>
<div class="a" style="left:999px;top:133px;width:13.6px;height:427px;background:#e9e7e3"></div>
<div class="a" style="left:999px;top:133px;width:13.6px;height:13.4px;background:#d4d0c8;border:1px solid;border-color:#fff #404040 #404040 #fff;box-shadow:inset -1px -1px 0 #808080"></div>
<svg class="a" style="left:0;top:0" width="1018" height="641"><path d="M1002.3 140.7H1008.3L1005.3 137.2Z" fill="#000"/></svg>
<div class="a" style="left:999px;top:146.4px;width:13.6px;height:155.6px;background:#d4d0c8;border:1px solid;border-color:#fff #404040 #404040 #fff;box-shadow:inset -1px -1px 0 #808080"></div>
<div class="a" style="left:999px;top:546.4px;width:13.6px;height:13px;background:#d4d0c8;border:1px solid;border-color:#fff #404040 #404040 #fff;box-shadow:inset -1px -1px 0 #808080"></div>
<svg class="a" style="left:0;top:0" width="1018" height="641"><path d="M1002.3 550.9H1008.3L1005.3 554.4Z" fill="#000"/></svg>
<div class="a" style="left:823px;top:560.4px;width:176px;height:13.4px;background:#e9e7e3"></div>
<div class="a" style="left:823px;top:560.4px;width:12.5px;height:13.4px;background:#d4d0c8;border:1px solid;border-color:#fff #404040 #404040 #fff;box-shadow:inset -1px -1px 0 #808080"></div>
<svg class="a" style="left:0;top:0" width="1018" height="641"><path d="M830.25 563.6V569.6L826.75 566.6Z" fill="#000"/></svg>
<div class="a" style="left:835.5px;top:560.4px;width:149.5px;height:13.4px;background:#d4d0c8;border:1px solid;border-color:#fff #404040 #404040 #fff;box-shadow:inset -1px -1px 0 #808080"></div>
<div class="a" style="left:985px;top:560.4px;width:13.7px;height:13.4px;background:#d4d0c8;border:1px solid;border-color:#fff #404040 #404040 #fff;box-shadow:inset -1px -1px 0 #808080"></div>
<svg class="a" style="left:0;top:0" width="1018" height="641"><path d="M989.85 563.6V569.6L993.35 566.6Z" fill="#000"/></svg>
<div class="a" style="left:1000px;top:560.3px;width:14.5px;height:15.2px;background:#d4d0c8"></div>
<svg class="a" style="left:827px;top:134px" width="11" height="12" viewBox="0 0 11 12"><path d="M0.5 2.5V9.5C0.5 12 10.5 12 10.5 9.5V2.5Z" fill="#f2c243" stroke="#c8921c" stroke-width=".8"/><ellipse cx="5.5" cy="2.6" rx="5" ry="2.1" fill="#fbe9a8" stroke="#d8a428" stroke-width=".8"/><path d="M2.3 4.5V10.3" stroke="#fdf0c0" stroke-width="1.3"/></svg>
<div class="t" style="left:843.7px;top:133.9px;font-weight:bold;font-size:9.2px;transform:scaleX(1.14);transform-origin:0 0">Data</div>
<svg class="a" style="left:832.5px;top:146px" width="1" height="414" viewBox="0 0 1 414"><path d="M0.5 0V414" stroke="#b4b4b4" stroke-width="1" stroke-dasharray="1 1"/></svg>
<svg class="a" style="left:849px;top:160px" width="1" height="400" viewBox="0 0 1 400"><path d="M0.5 0V400" stroke="#b4b4b4" stroke-width="1" stroke-dasharray="1 1"/></svg>
<svg class="a" style="left:836px;top:153.53500000000003px" width="8" height="1" viewBox="0 0 8 1"><path d="M0 0.5H8" stroke="#b4b4b4" stroke-width="1" stroke-dasharray="1 1"/></svg>
<div class="a" style="left:829.5px;top:150.3px;width:7px;height:7px;background:#fff;border:1px solid #808080"></div>
<div class="a" style="left:831px;top:153.1px;width:4px;height:1.4px;background:#000"></div>
<svg class="a" style="left:843.3px;top:147.6px" width="11" height="12" viewBox="0 0 11 12"><path d="M0.5 2.5V9.5C0.5 12 10.5 12 10.5 9.5V2.5Z" fill="#f2c243" stroke="#c8921c" stroke-width=".8"/><ellipse cx="5.5" cy="2.6" rx="5" ry="2.1" fill="#fbe9a8" stroke="#d8a428" stroke-width=".8"/><path d="M2.3 4.5V10.3" stroke="#fdf0c0" stroke-width="1.3"/></svg>
<div class="a" style="left:858px;top:147px;width:26px;height:13px;background:#0a246a"></div>
<div class="t" style="left:860.3px;top:147.835px;font-weight:bold;font-size:9.2px;color:#fff;transform:scaleX(1.1);transform-origin:0 0">Jobs</div>
<svg class="a" style="left:850px;top:167.17px" width="9" height="1" viewBox="0 0 9 1"><path d="M0 0.5H9" stroke="#b4b4b4" stroke-width="1" stroke-dasharray="1 1"/></svg>
<svg class="a" style="left:859px;top:162.47px" width="11" height="10" viewBox="0 0 11 10"><rect x="0" y="0" width="11" height="10" fill="#fbfcfe"/><rect x="0" y="0" width="11" height="2.4" fill="#7397d6"/><path d="M0 4.9H11M0 7.4H11M2.9 2.4V10M5.5 2.4V10M8.1 2.4V10" stroke="#b4c4e4" stroke-width=".7"/><rect x="0.35" y="0.35" width="10.3" height="9.3" fill="none" stroke="#8fa9d8" stroke-width=".7"/><rect x="5.9" y="5.3" width="2" height="1.9" fill="#8a9cc8"/></svg>
<div class="t" style="left:876px;top:161.67px;font-size:9.0px">ActOpEndDate</div>
<svg class="a" style="left:850px;top:180.9px" width="9" height="1" viewBox="0 0 9 1"><path d="M0 0.5H9" stroke="#b4b4b4" stroke-width="1" stroke-dasharray="1 1"/></svg>
<svg class="a" style="left:859px;top:176.2px" width="11" height="10" viewBox="0 0 11 10"><rect x="0" y="0" width="11" height="10" fill="#fbfcfe"/><rect x="0" y="0" width="11" height="2.4" fill="#7397d6"/><path d="M0 4.9H11M0 7.4H11M2.9 2.4V10M5.5 2.4V10M8.1 2.4V10" stroke="#b4c4e4" stroke-width=".7"/><rect x="0.35" y="0.35" width="10.3" height="9.3" fill="none" stroke="#8fa9d8" stroke-width=".7"/><rect x="5.9" y="5.3" width="2" height="1.9" fill="#8a9cc8"/></svg>
<div class="t" style="left:876px;top:175.4px;font-size:9.0px">ActOpStartDate</div>
<svg class="a" style="left:850px;top:194.64px" width="9" height="1" viewBox="0 0 9 1"><path d="M0 0.5H9" stroke="#b4b4b4" stroke-width="1" stroke-dasharray="1 1"/></svg>
<svg class="a" style="left:859px;top:189.94px" width="11" height="10" viewBox="0 0 11 10"><rect x="0.5" y="0.5" width="10" height="9" fill="#fff" stroke="#9a9a9a" stroke-width="1"/><text x="5.5" y="8.2" text-anchor="middle" font-family="Liberation Serif" font-weight="bold" font-size="8.5" fill="#101010">A</text></svg>
<div class="t" style="left:876px;top:189.14px;font-size:9.0px">ActScheduleMethodCommand</div>
<svg class="a" style="left:850px;top:208.38px" width="9" height="1" viewBox="0 0 9 1"><path d="M0 0.5H9" stroke="#b4b4b4" stroke-width="1" stroke-dasharray="1 1"/></svg>
<svg class="a" style="left:859px;top:203.68px" width="11" height="10" viewBox="0 0 11 10"><rect x="0.5" y="0.5" width="10" height="9" fill="#fff" stroke="#9a9a9a" stroke-width="1"/><text x="5.6" y="7.8" text-anchor="middle" font-family="Liberation Sans" font-size="6.8" fill="#202020">.0</text></svg>
<div class="t" style="left:876px;top:202.88px;font-size:9.0px">ActScheduleMethodID</div>
<svg class="a" style="left:850px;top:222.11px" width="9" height="1" viewBox="0 0 9 1"><path d="M0 0.5H9" stroke="#b4b4b4" stroke-width="1" stroke-dasharray="1 1"/></svg>
<svg class="a" style="left:859px;top:217.41px" width="11" height="10" viewBox="0 0 11 10"><rect x="0.5" y="0.5" width="10" height="9" fill="#fff" stroke="#9a9a9a" stroke-width="1"/><text x="5.6" y="7.8" text-anchor="middle" font-family="Liberation Sans" font-size="6.8" fill="#202020">.0</text></svg>
<div class="t" style="left:876px;top:216.61px;font-size:9.0px">ActTypeOfWorkID</div>
<svg class="a" style="left:850px;top:235.84px" width="9" height="1" viewBox="0 0 9 1"><path d="M0 0.5H9" stroke="#b4b4b4" stroke-width="1" stroke-dasharray="1 1"/></svg>
<svg class="a" style="left:859px;top:231.14px" width="11" height="10" viewBox="0 0 11 10"><rect x="0.5" y="0.5" width="10" height="9" fill="#fff" stroke="#9a9a9a" stroke-width="1"/><text x="5.5" y="8.2" text-anchor="middle" font-family="Liberation Serif" font-weight="bold" font-size="8.5" fill="#101010">A</text></svg>
<div class="t" style="left:876px;top:230.34px;font-size:9.0px">ActTypeOfWorkName</div>
<svg class="a" style="left:850px;top:249.58px" width="9" height="1" viewBox="0 0 9 1"><path d="M0 0.5H9" stroke="#b4b4b4" stroke-width="1" stroke-dasharray="1 1"/></svg>
<svg class="a" style="left:859px;top:244.88px" width="11" height="10" viewBox="0 0 11 10"><rect x="0.5" y="0.5" width="10" height="9" fill="#fff" stroke="#9db8e0" stroke-width="1"/><path d="M2.8 5L4.8 7.2L8.4 2.6" fill="none" stroke="#3a68c0" stroke-width="1.4"/></svg>
<div class="t" style="left:876px;top:244.08px;font-size:9.0px">Assembly</div>
<svg class="a" style="left:850px;top:263.31px" width="9" height="1" viewBox="0 0 9 1"><path d="M0 0.5H9" stroke="#b4b4b4" stroke-width="1" stroke-dasharray="1 1"/></svg>
<svg class="a" style="left:859px;top:258.62px" width="11" height="10" viewBox="0 0 11 10"><rect x="0.5" y="0.5" width="10" height="9" fill="#fff" stroke="#9a9a9a" stroke-width="1"/><text x="5.6" y="7.8" text-anchor="middle" font-family="Liberation Sans" font-size="6.8" fill="#202020">.0</text></svg>
<div class="t" style="left:876px;top:257.81px;font-size:9.0px">AssemblyID</div>
<svg class="a" style="left:850px;top:277.05px" width="9" height="1" viewBox="0 0 9 1"><path d="M0 0.5H9" stroke="#b4b4b4" stroke-width="1" stroke-dasharray="1 1"/></svg>
<svg class="a" style="left:859px;top:272.35px" width="11" height="10" viewBox="0 0 11 10"><rect x="0.5" y="0.5" width="10" height="9" fill="#fff" stroke="#9a9a9a" stroke-width="1"/><text x="5.5" y="8.2" text-anchor="middle" font-family="Liberation Serif" font-weight="bold" font-size="8.5" fill="#101010">A</text></svg>
<div class="t" style="left:876px;top:271.55px;font-size:9.0px">AssemblyName</div>
<svg class="a" style="left:850px;top:290.78px" width="9" height="1" viewBox="0 0 9 1"><path d="M0 0.5H9" stroke="#b4b4b4" stroke-width="1" stroke-dasharray="1 1"/></svg>
<svg class="a" style="left:859px;top:286.08px" width="11" height="10" viewBox="0 0 11 10"><rect x="0" y="0" width="11" height="10" fill="#fbfcfe"/><rect x="0" y="0" width="11" height="2.4" fill="#7397d6"/><path d="M0 4.9H11M0 7.4H11M2.9 2.4V10M5.5 2.4V10M8.1 2.4V10" stroke="#b4c4e4" stroke-width=".7"/><rect x="0.35" y="0.35" width="10.3" height="9.3" fill="none" stroke="#8fa9d8" stroke-width=".7"/><rect x="5.9" y="5.3" width="2" height="1.9" fill="#8a9cc8"/></svg>
<div class="t" style="left:876px;top:285.28px;font-size:9.0px">BaseLineEndDate</div>
<svg class="a" style="left:850px;top:304.52px" width="9" height="1" viewBox="0 0 9 1"><path d="M0 0.5H9" stroke="#b4b4b4" stroke-width="1" stroke-dasharray="1 1"/></svg>
<svg class="a" style="left:859px;top:299.82px" width="11" height="10" viewBox="0 0 11 10"><rect x="0.5" y="0.5" width="10" height="9" fill="#fff" stroke="#9a9a9a" stroke-width="1"/><text x="5.6" y="7.8" text-anchor="middle" font-family="Liberation Sans" font-size="6.8" fill="#202020">.0</text></svg>
<div class="t" style="left:876px;top:299.02px;font-size:9.0px">BaseLineEndShift</div>
<svg class="a" style="left:850px;top:318.25px" width="9" height="1" viewBox="0 0 9 1"><path d="M0 0.5H9" stroke="#b4b4b4" stroke-width="1" stroke-dasharray="1 1"/></svg>
<svg class="a" style="left:859px;top:313.56px" width="11" height="10" viewBox="0 0 11 10"><rect x="0" y="0" width="11" height="10" fill="#fbfcfe"/><rect x="0" y="0" width="11" height="2.4" fill="#7397d6"/><path d="M0 4.9H11M0 7.4H11M2.9 2.4V10M5.5 2.4V10M8.1 2.4V10" stroke="#b4c4e4" stroke-width=".7"/><rect x="0.35" y="0.35" width="10.3" height="9.3" fill="none" stroke="#8fa9d8" stroke-width=".7"/><rect x="5.9" y="5.3" width="2" height="1.9" fill="#8a9cc8"/></svg>
<div class="t" style="left:876px;top:312.75px;font-size:9.0px">BaseLineStartDate</div>
<svg class="a" style="left:850px;top:331.99px" width="9" height="1" viewBox="0 0 9 1"><path d="M0 0.5H9" stroke="#b4b4b4" stroke-width="1" stroke-dasharray="1 1"/></svg>
<svg class="a" style="left:859px;top:327.29px" width="11" height="10" viewBox="0 0 11 10"><rect x="0.5" y="0.5" width="10" height="9" fill="#fff" stroke="#9a9a9a" stroke-width="1"/><text x="5.6" y="7.8" text-anchor="middle" font-family="Liberation Sans" font-size="6.8" fill="#202020">.0</text></svg>
<div class="t" style="left:876px;top:326.49px;font-size:9.0px">BaseLineStartShift</div>
<svg class="a" style="left:850px;top:345.72px" width="9" height="1" viewBox="0 0 9 1"><path d="M0 0.5H9" stroke="#b4b4b4" stroke-width="1" stroke-dasharray="1 1"/></svg>
<svg class="a" style="left:859px;top:341.02px" width="11" height="10" viewBox="0 0 11 10"><rect x="0.5" y="0.5" width="10" height="9" fill="#fff" stroke="#9a9a9a" stroke-width="1"/><text x="5.6" y="7.8" text-anchor="middle" font-family="Liberation Sans" font-size="6.8" fill="#202020">.0</text></svg>
<div class="t" style="left:876px;top:340.22px;font-size:9.0px">CopiedOrderID</div>
<svg class="a" style="left:850px;top:359.46px" width="9" height="1" viewBox="0 0 9 1"><path d="M0 0.5H9" stroke="#b4b4b4" stroke-width="1" stroke-dasharray="1 1"/></svg>
<svg class="a" style="left:859px;top:354.76px" width="11" height="10" viewBox="0 0 11 10"><rect x="0.5" y="0.5" width="10" height="9" fill="#fff" stroke="#9a9a9a" stroke-width="1"/><text x="5.6" y="7.8" text-anchor="middle" font-family="Liberation Sans" font-size="6.8" fill="#202020">.0</text></svg>
<div class="t" style="left:876px;top:353.96px;font-size:9.0px">CriticalRatio</div>
<svg class="a" style="left:850px;top:373.19px" width="9" height="1" viewBox="0 0 9 1"><path d="M0 0.5H9" stroke="#b4b4b4" stroke-width="1" stroke-dasharray="1 1"/></svg>
<svg class="a" style="left:859px;top:368.5px" width="11" height="10" viewBox="0 0 11 10"><rect x="0.5" y="0.5" width="10" height="9" fill="#fff" stroke="#9a9a9a" stroke-width="1"/><text x="5.5" y="8.2" text-anchor="middle" font-family="Liberation Serif" font-weight="bold" font-size="8.5" fill="#101010">A</text></svg>
<div class="t" style="left:876px;top:367.69px;font-size:9.0px">CurOpDescription</div>
<svg class="a" style="left:850px;top:386.93px" width="9" height="1" viewBox="0 0 9 1"><path d="M0 0.5H9" stroke="#b4b4b4" stroke-width="1" stroke-dasharray="1 1"/></svg>
<svg class="a" style="left:859px;top:382.23px" width="11" height="10" viewBox="0 0 11 10"><rect x="0" y="0" width="11" height="10" fill="#fbfcfe"/><rect x="0" y="0" width="11" height="2.4" fill="#7397d6"/><path d="M0 4.9H11M0 7.4H11M2.9 2.4V10M5.5 2.4V10M8.1 2.4V10" stroke="#b4c4e4" stroke-width=".7"/><rect x="0.35" y="0.35" width="10.3" height="9.3" fill="none" stroke="#8fa9d8" stroke-width=".7"/><rect x="5.9" y="5.3" width="2" height="1.9" fill="#8a9cc8"/></svg>
<div class="t" style="left:876px;top:381.43px;font-size:9.0px">CurOpEndDate</div>
<svg class="a" style="left:850px;top:400.66px" width="9" height="1" viewBox="0 0 9 1"><path d="M0 0.5H9" stroke="#b4b4b4" stroke-width="1" stroke-dasharray="1 1"/></svg>
<svg class="a" style="left:859px;top:395.96px" width="11" height="10" viewBox="0 0 11 10"><rect x="0.5" y="0.5" width="10" height="9" fill="#fff" stroke="#9a9a9a" stroke-width="1"/><text x="5.5" y="8.2" text-anchor="middle" font-family="Liberation Serif" font-weight="bold" font-size="8.5" fill="#101010">A</text></svg>
<div class="t" style="left:876px;top:395.16px;font-size:9.0px">CurOpIdent</div>
<svg class="a" style="left:850px;top:414.4px" width="9" height="1" viewBox="0 0 9 1"><path d="M0 0.5H9" stroke="#b4b4b4" stroke-width="1" stroke-dasharray="1 1"/></svg>
<svg class="a" style="left:859px;top:409.7px" width="11" height="10" viewBox="0 0 11 10"><rect x="0.5" y="0.5" width="10" height="9" fill="#fff" stroke="#9a9a9a" stroke-width="1"/><text x="5.5" y="8.2" text-anchor="middle" font-family="Liberation Serif" font-weight="bold" font-size="8.5" fill="#101010">A</text></svg>
<div class="t" style="left:876px;top:408.9px;font-size:9.0px">CurOpResourceName</div>
<svg class="a" style="left:850px;top:428.13px" width="9" height="1" viewBox="0 0 9 1"><path d="M0 0.5H9" stroke="#b4b4b4" stroke-width="1" stroke-dasharray="1 1"/></svg>
<svg class="a" style="left:859px;top:423.44px" width="11" height="10" viewBox="0 0 11 10"><rect x="0.5" y="0.5" width="10" height="9" fill="#fff" stroke="#9a9a9a" stroke-width="1"/><text x="5.6" y="7.8" text-anchor="middle" font-family="Liberation Sans" font-size="6.8" fill="#202020">.0</text></svg>
<div class="t" style="left:876px;top:422.63px;font-size:9.0px">CurOpSeq</div>
<svg class="a" style="left:850px;top:441.87px" width="9" height="1" viewBox="0 0 9 1"><path d="M0 0.5H9" stroke="#b4b4b4" stroke-width="1" stroke-dasharray="1 1"/></svg>
<svg class="a" style="left:859px;top:437.17px" width="11" height="10" viewBox="0 0 11 10"><rect x="0" y="0" width="11" height="10" fill="#fbfcfe"/><rect x="0" y="0" width="11" height="2.4" fill="#7397d6"/><path d="M0 4.9H11M0 7.4H11M2.9 2.4V10M5.5 2.4V10M8.1 2.4V10" stroke="#b4c4e4" stroke-width=".7"/><rect x="0.35" y="0.35" width="10.3" height="9.3" fill="none" stroke="#8fa9d8" stroke-width=".7"/><rect x="5.9" y="5.3" width="2" height="1.9" fill="#8a9cc8"/></svg>
<div class="t" style="left:876px;top:436.37px;font-size:9.0px">CurOpStartDate</div>
<svg class="a" style="left:850px;top:455.6px" width="9" height="1" viewBox="0 0 9 1"><path d="M0 0.5H9" stroke="#b4b4b4" stroke-width="1" stroke-dasharray="1 1"/></svg>
<svg class="a" style="left:859px;top:450.9px" width="11" height="10" viewBox="0 0 11 10"><rect x="0.5" y="0.5" width="10" height="9" fill="#fff" stroke="#9a9a9a" stroke-width="1"/><text x="5.5" y="8.2" text-anchor="middle" font-family="Liberation Serif" font-weight="bold" font-size="8.5" fill="#101010">A</text></svg>
<div class="t" style="left:876px;top:450.1px;font-size:9.0px">CurOpStatusName</div>
<svg class="a" style="left:850px;top:469.34px" width="9" height="1" viewBox="0 0 9 1"><path d="M0 0.5H9" stroke="#b4b4b4" stroke-width="1" stroke-dasharray="1 1"/></svg>
<svg class="a" style="left:859px;top:464.64px" width="11" height="10" viewBox="0 0 11 10"><rect x="0.5" y="0.5" width="10" height="9" fill="#fff" stroke="#9a9a9a" stroke-width="1"/><text x="5.6" y="7.8" text-anchor="middle" font-family="Liberation Sans" font-size="6.8" fill="#202020">.0</text></svg>
<div class="t" style="left:876px;top:463.84px;font-size:9.0px">DeliveryStatus</div>
<svg class="a" style="left:850px;top:483.07px" width="9" height="1" viewBox="0 0 9 1"><path d="M0 0.5H9" stroke="#b4b4b4" stroke-width="1" stroke-dasharray="1 1"/></svg>
<svg class="a" style="left:859px;top:478.38px" width="11" height="10" viewBox="0 0 11 10"><rect x="0" y="0" width="11" height="10" fill="#fbfcfe"/><rect x="0" y="0" width="11" height="2.4" fill="#7397d6"/><path d="M0 4.9H11M0 7.4H11M2.9 2.4V10M5.5 2.4V10M8.1 2.4V10" stroke="#b4c4e4" stroke-width=".7"/><rect x="0.35" y="0.35" width="10.3" height="9.3" fill="none" stroke="#8fa9d8" stroke-width=".7"/><rect x="5.9" y="5.3" width="2" height="1.9" fill="#8a9cc8"/></svg>
<div class="t" style="left:876px;top:477.57px;font-size:9.0px">DueDate</div>
<svg class="a" style="left:850px;top:496.81px" width="9" height="1" viewBox="0 0 9 1"><path d="M0 0.5H9" stroke="#b4b4b4" stroke-width="1" stroke-dasharray="1 1"/></svg>
<svg class="a" style="left:859px;top:492.11px" width="11" height="10" viewBox="0 0 11 10"><rect x="0.5" y="0.5" width="10" height="9" fill="#fff" stroke="#9a9a9a" stroke-width="1"/><text x="5.6" y="7.8" text-anchor="middle" font-family="Liberation Sans" font-size="6.8" fill="#202020">.0</text></svg>
<div class="t" style="left:876px;top:491.31px;font-size:9.0px">DueShift</div>
<svg class="a" style="left:850px;top:510.54px" width="9" height="1" viewBox="0 0 9 1"><path d="M0 0.5H9" stroke="#b4b4b4" stroke-width="1" stroke-dasharray="1 1"/></svg>
<svg class="a" style="left:859px;top:505.84px" width="11" height="10" viewBox="0 0 11 10"><rect x="0.5" y="0.5" width="10" height="9" fill="#fff" stroke="#9a9a9a" stroke-width="1"/><text x="5.6" y="7.8" text-anchor="middle" font-family="Liberation Sans" font-size="6.8" fill="#202020">.0</text></svg>
<div class="t" style="left:876px;top:505.04px;font-size:9.0px">EmployeeID</div>
<svg class="a" style="left:850px;top:524.28px" width="9" height="1" viewBox="0 0 9 1"><path d="M0 0.5H9" stroke="#b4b4b4" stroke-width="1" stroke-dasharray="1 1"/></svg>
<svg class="a" style="left:859px;top:519.58px" width="11" height="10" viewBox="0 0 11 10"><rect x="0.5" y="0.5" width="10" height="9" fill="#fff" stroke="#9a9a9a" stroke-width="1"/><text x="5.5" y="8.2" text-anchor="middle" font-family="Liberation Serif" font-weight="bold" font-size="8.5" fill="#101010">A</text></svg>
<div class="t" style="left:876px;top:518.78px;font-size:9.0px">EmployeeName</div>
<svg class="a" style="left:850px;top:538.02px" width="9" height="1" viewBox="0 0 9 1"><path d="M0 0.5H9" stroke="#b4b4b4" stroke-width="1" stroke-dasharray="1 1"/></svg>
<svg class="a" style="left:859px;top:533.32px" width="11" height="10" viewBox="0 0 11 10"><rect x="0.5" y="0.5" width="10" height="9" fill="#fff" stroke="#9a9a9a" stroke-width="1"/><text x="5.5" y="8.2" text-anchor="middle" font-family="Liberation Serif" font-weight="bold" font-size="8.5" fill="#101010">A</text></svg>
<div class="t" style="left:876px;top:532.52px;font-size:9.0px">EmployeeNumber</div>
<svg class="a" style="left:850px;top:551.75px" width="9" height="1" viewBox="0 0 9 1"><path d="M0 0.5H9" stroke="#b4b4b4" stroke-width="1" stroke-dasharray="1 1"/></svg>
<svg class="a" style="left:859px;top:547.05px" width="11" height="10" viewBox="0 0 11 10"><rect x="0.5" y="0.5" width="10" height="9" fill="#fff" stroke="#9db8e0" stroke-width="1"/><path d="M2.8 5L4.8 7.2L8.4 2.6" fill="none" stroke="#3a68c0" stroke-width="1.4"/></svg>
<div class="t" style="left:876px;top:546.25px;font-size:9.0px">FinalAssembly</div>
<div class="a" style="left:822px;top:581px;width:10px;height:10px;background:#fff;border:1px solid;border-color:#808080 #fff #fff #808080;box-shadow:inset 1px 1px 0 #404040"></div>
<svg class="a" style="left:824px;top:583px" width="7" height="7" viewBox="0 0 7 7"><path d="M0.6 2.8L2.6 4.8L6.2 0.8" fill="none" stroke="#000" stroke-width="1.5"/></svg>
<div class="t" style="left:836.5px;top:580px;font-size:9.3px">Create field</div>
<div class="a" style="left:822px;top:595px;width:10px;height:10px;background:#fff;border:1px solid;border-color:#808080 #fff #fff #808080;box-shadow:inset 1px 1px 0 #404040"></div>
<div class="t" style="left:836.5px;top:594px;font-size:9.3px">Create caption</div>
<div class="a" style="left:822px;top:609px;width:10px;height:10px;background:#fff;border:1px solid;border-color:#808080 #fff #fff #808080;box-shadow:inset 1px 1px 0 #404040"></div>
<svg class="a" style="left:824px;top:611px" width="7" height="7" viewBox="0 0 7 7"><path d="M0.6 2.8L2.6 4.8L6.2 0.8" fill="none" stroke="#000" stroke-width="1.5"/></svg>
<div class="t" style="left:836.5px;top:608px;font-size:9.3px">Sort by Name</div>
<div class="a" style="left:3px;top:623.5px;width:64px;height:13.5px;border:1px solid;border-color:#808080 #fff #fff #808080"></div>
<div class="a" style="left:70px;top:623.5px;width:195.5px;height:13.5px;border:1px solid;border-color:#808080 #fff #fff #808080"></div>
<div class="a" style="left:267px;top:623.5px;width:748px;height:13.5px;border:1px solid;border-color:#808080 #fff #fff #808080"></div>
<div class="t" style="left:4.5px;top:625px;font-size:9.3px">Inches</div>
<svg class="a" style="left:73.5px;top:625px" width="12" height="11" viewBox="0 0 12 11"><path d="M2 0V3M0 2H4" stroke="#606060" stroke-width=".8"/><rect x="4" y="3" width="7" height="7.5" fill="#bcd4f4" stroke="#88a8dc" stroke-width=".8"/></svg>
<div class="t" style="left:88px;top:625px;font-size:9.3px">3; 3</div>
<div class="t" style="left:269.5px;top:625px;font-size:9.3px">txtJobStatus: Job Status</div>
<svg class="a" style="left:1001px;top:625px" width="12" height="12" viewBox="0 0 12 12"><path d="M11.5 1L1 11.5M11.5 5L5 11.5M11.5 9L9 11.5" stroke="#808080" stroke-width="1"/><path d="M11.5 2L2 11.5M11.5 6L6 11.5M11.5 10L10 11.5" stroke="#fff" stroke-width="1"/></svg>
</body></html>
